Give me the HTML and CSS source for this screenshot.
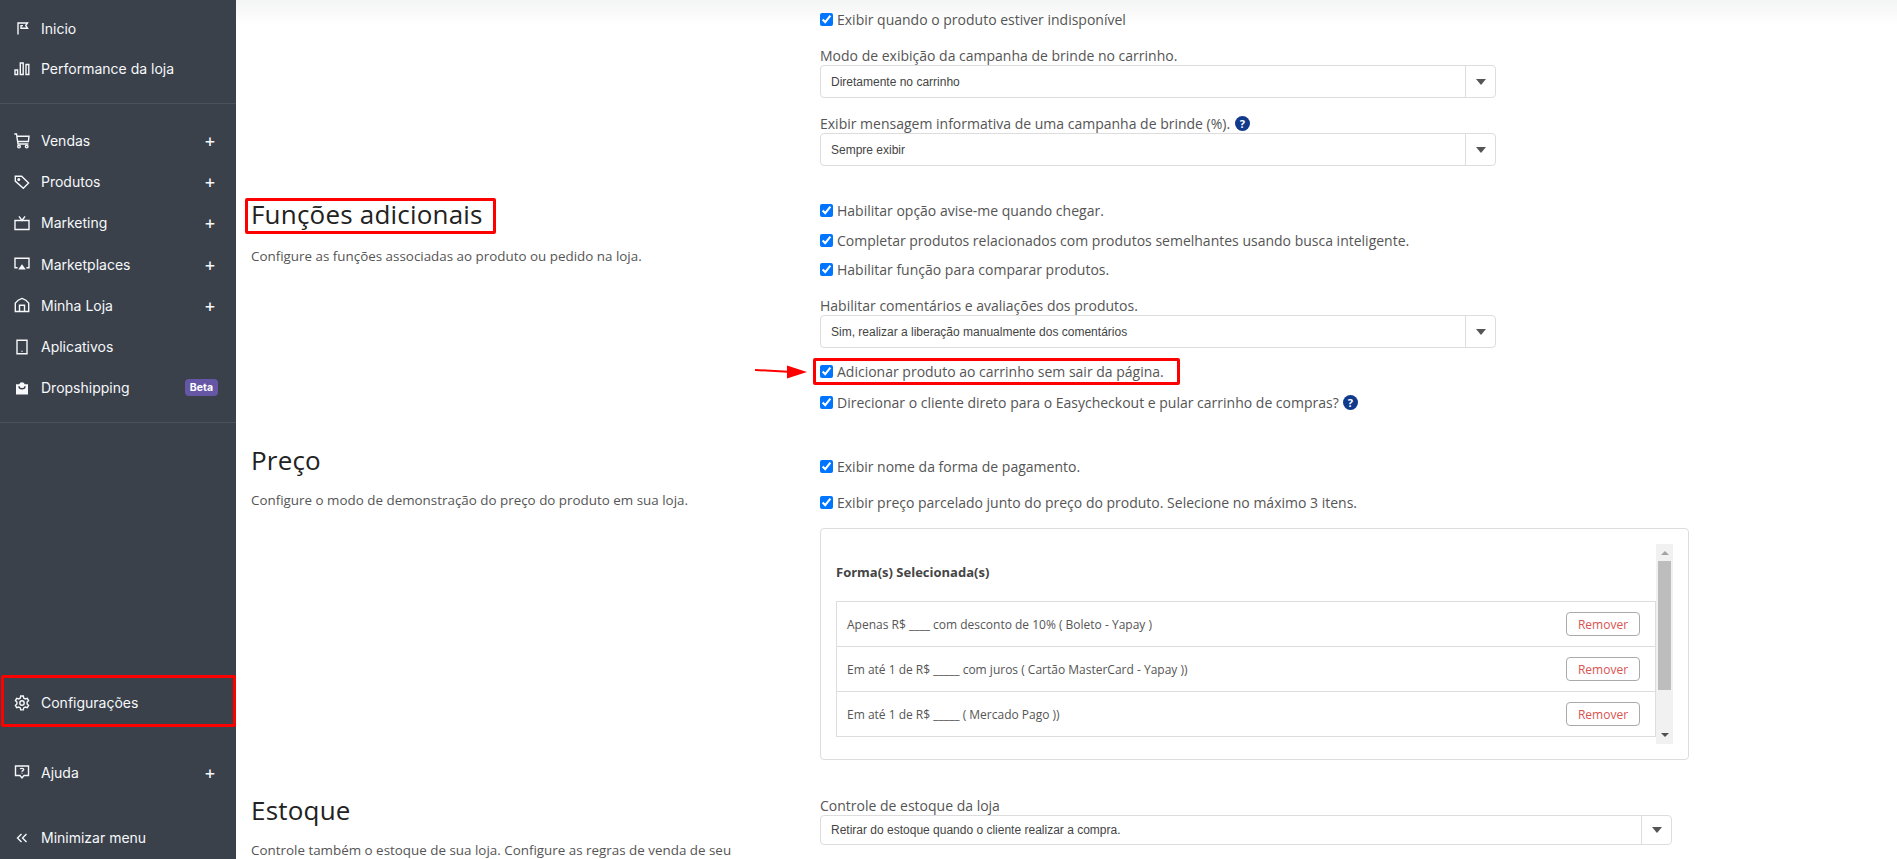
FILE: index.html
```html
<!DOCTYPE html>
<html lang="pt-BR">
<head>
<meta charset="utf-8">
<title>Configurações</title>
<link rel="stylesheet" href="styles.css">
</head>
<body>
<aside class="sidebar">
  <nav class="group first">
    <a class="item"><svg class="ico" viewBox="0 0 16 16"><path d="M4 14.5V3h9.5l-1.8 2.5 1.8 2.7H7V5.6h2"/></svg><span>Inicio</span></a>
    <a class="item"><svg class="ico" viewBox="0 0 16 16"><path d="M1 10h2.6v4.5H1zM6.3 3h2.9v11.5H6.3zM12 4.5h2.8v10H12z"/></svg><span>Performance da loja</span></a>
  </nav>
  <nav class="group second">
    <a class="item"><svg class="ico" viewBox="0 0 16 16"><path d="M.3 1h2.2l1.5 10h10.4M3 3.2h12l-.6 5.3H3.8"/><circle cx="5" cy="13.6" r="1.3"/><circle cx="12.7" cy="13.6" r="1.3"/></svg><span>Vendas</span><i class="plus">+</i></a>
    <a class="item"><svg class="ico" viewBox="0 0 16 16"><path d="M1.3 2.2h6.3l7 6.8-5.3 5.3-8-7.2z"/><circle cx="4.8" cy="5.4" r=".8"/></svg><span>Produtos</span><i class="plus">+</i></a>
    <a class="item"><svg class="ico" viewBox="0 0 16 16"><path d="M1 5.5h14v9H1zM5 1.3l3 4.2 3-4.2"/></svg><span>Marketing</span><i class="plus">+</i></a>
    <a class="item"><svg class="ico" viewBox="0 0 16 16"><path d="M3.6 11.8H1V2.2h14v9.6h-2.6"/><path class="fill" d="M8 8.3l3.8 5.2H4.2z"/></svg><span>Marketplaces</span><i class="plus">+</i></a>
    <a class="item"><svg class="ico" viewBox="0 0 16 16"><path d="M1.3 14.5V6.2C3 3.5 5.5 2 8 1.3c2.5.7 5 2.2 6.7 4.9v8.3zM5.5 14.5V8.2h5v6.3"/></svg><span>Minha Loja</span><i class="plus">+</i></a>
    <a class="item"><svg class="ico" viewBox="0 0 16 16"><path d="M3 1.3h10v13.4H3z"/><path d="M8 11.7v1"/></svg><span>Aplicativos</span></a>
    <a class="item"><svg class="ico" viewBox="0 0 16 16"><path class="fill" d="M2 4.2h3.2a3 3 0 0 1 5.6 0H14v10.3H2z"/><path class="cut" d="M5 6.2a3 2.6 0 0 0 6 0"/></svg><span>Dropshipping</span><b class="beta">Beta</b></a>
  </nav>
  <div class="bottom">
    <a class="item config"><svg class="ico" viewBox="0 0 16 16"><path d="M6.7 1h2.6l.4 2 1.6.9 2-.6 1.3 2.3-1.5 1.4v1.9l1.5 1.4-1.3 2.3-2-.6-1.6.9-.4 2H6.7l-.4-2-1.6-.9-2 .6-1.3-2.3L2.9 9V7.1L1.4 5.6l1.3-2.3 2 .6 1.6-.9z"/><circle cx="8" cy="8" r="2.2"/></svg><span>Configurações</span></a>
    <a class="item help"><svg class="ico" viewBox="0 0 16 16"><path d="M1.5 2h13v9.5H10l-2 2.5-2-2.5H1.5z"/><path d="M6.3 5.2c.3-1.2 3.4-1.2 3.4.4 0 1-1.7 1.1-1.7 2.2M8 8.7v.7"/></svg><span>Ajuda</span><i class="plus">+</i></a>
    <a class="item min"><svg class="ico" viewBox="0 0 16 16"><path d="M7.5 4l-4 4 4 4M12.5 4l-4 4 4 4"/></svg><span>Minimizar menu</span></a>
  </div>
</aside>

<main class="main">
  <section class="sec sec-a">
    <div class="left"></div>
    <div class="right">
      <label class="check"><input type="checkbox" checked>Exibir quando o produto estiver indisponível</label>
      <div class="label gap-17">Modo de exibição da campanha de brinde no carrinho.</div>
      <div class="select"><span>Diretamente no carrinho</span><i class="caret"></i></div>
      <div class="label gap-16">Exibir mensagem informativa de uma campanha de brinde (%). <b class="q">?</b></div>
      <div class="select"><span>Sempre exibir</span><i class="caret"></i></div>
    </div>
  </section>

  <section class="sec sec-b">
    <div class="left">
      <h2 class="marked">Funções adicionais</h2>
      <p class="desc">Configure as funções associadas ao produto ou pedido na loja.</p>
    </div>
    <div class="right">
      <label class="check"><input type="checkbox" checked>Habilitar opção avise-me quando chegar.</label>
      <label class="check gap-10"><input type="checkbox" checked>Completar produtos relacionados com produtos semelhantes usando busca inteligente.</label>
      <label class="check gap-9"><input type="checkbox" checked>Habilitar função para comparar produtos.</label>
      <div class="label gap-17">Habilitar comentários e avaliações dos produtos.</div>
      <div class="select"><span>Sim, realizar a liberação manualmente dos comentários</span><i class="caret"></i></div>
      <div class="mark-row">
        <svg class="arrow" viewBox="0 0 52 14"><path class="shaft" d="M0 5l33 1.7"/><path d="M32 .5L52 7 32 13.5z"/></svg>
        <label class="check boxed"><input type="checkbox" checked>Adicionar produto ao carrinho sem sair da página.</label>
      </div>
      <label class="check gap-7"><input type="checkbox" checked>Direcionar o cliente direto para o Easycheckout e pular carrinho de compras? <b class="q">?</b></label>
    </div>
  </section>

  <section class="sec sec-c">
    <div class="left">
      <h2 class="lifted">Preço</h2>
      <p class="desc desc-c">Configure o modo de demonstração do preço do produto em sua loja.</p>
    </div>
    <div class="right wide">
      <label class="check"><input type="checkbox" checked>Exibir nome da forma de pagamento.</label>
      <label class="check gap-16"><input type="checkbox" checked>Exibir preço parcelado junto do preço do produto. Selecione no máximo 3 itens.</label>
      <div class="panel">
        <div class="scroller">
          <div class="content">
            <div class="panel-title">Forma(s) Selecionada(s)</div>
            <ul class="list">
              <li><span>Apenas R$ ____ com desconto de 10% ( Boleto - Yapay )</span><button class="btn">Remover</button></li>
              <li><span>Em até 1 de R$ _____ com juros ( Cartão MasterCard - Yapay ))</span><button class="btn">Remover</button></li>
              <li><span>Em até 1 de R$ _____ ( Mercado Pago ))</span><button class="btn">Remover</button></li>
            </ul>
          </div>
          <div class="scrollbar"><i class="up"></i><i class="thumb"></i><i class="down"></i></div>
        </div>
      </div>
    </div>
  </section>

  <section class="sec sec-d">
    <div class="left">
      <h2>Estoque</h2>
      <p class="desc desc-c">Controle também o estoque de sua loja. Configure as regras de venda de seu</p>
    </div>
    <div class="right stock">
      <div class="label">Controle de estoque da loja</div>
      <div class="select short"><span>Retirar do estoque quando o cliente realizar a compra.</span><i class="caret"></i></div>
    </div>
  </section>
</main>
</body>
</html>
```

FILE: styles.css
```css
* { box-sizing: border-box; }
html, body { margin: 0; height: 100%; overflow: hidden; }
body { display: flex; background: #fff; font-family: "Open Sans", sans-serif; font-size: 14px; color: #555; }

.sidebar { width: 236px; height: 859px; flex: none; background: #3a414b; color: #f6f8fa; display: flex; flex-direction: column; font-family: "Inter", sans-serif; font-size: 14px; }
.group.first { padding: 8px 0 15px; border-bottom: 1px solid #48515c; }
.group.first .item { height: 40px; }
.group.second { padding: 16px 0 14px; border-bottom: 1px solid #48515c; }
.item { display: flex; align-items: center; height: 41.2px; padding-left: 14px; padding-right: 18px; position: relative; }
.item span { margin-left: 11px; flex: 1; white-space: nowrap; }
.ico { width: 16px; height: 16px; flex: none; fill: none; stroke: #f6f8fa; stroke-width: 1.4; }
.ico .fill { fill: #f6f8fa; stroke: none; }
.ico .cut { stroke: #3a414b; }
.plus { font-style: normal; font-size: 18px; font-weight: 400; width: 16px; text-align: center; }
.beta { background: #6556a6; color: #fff; font-size: 10.5px; font-weight: 700; padding: 0 5px; height: 17px; line-height: 17px; border-radius: 4px; }
.bottom { margin-top: auto; }
.config { margin: 0 0 24px 1px; height: 52px; padding-left: 10px; padding-top: 3px; border: 3px solid #f00; border-radius: 2px; width: 235px; }
.help { height: 42px; margin-bottom: 24px; }
.min { height: 41px; margin-bottom: 1px; }

.main { flex: 1; min-width: 0; height: 859px; overflow: hidden; padding-top: 9px; position: relative; }
.main::before { content: ""; position: absolute; left: 0; right: 0; top: 0; height: 24px; background: linear-gradient(#f3f4f4, #fff); }
.sec { display: grid; grid-template-columns: 584px 1fr; position: relative; }
.left { padding-left: 15px; }
.right { width: 676px; }
.right.wide { width: 869px; }
.right.stock { width: 852px; padding-top: 4px; }
.sec-b { margin-top: 32px; }
.sec-b .right { padding-top: 2px; }
.sec-c { margin-top: 31px; }
.sec-c .right { padding-top: 13px; }
.sec-d { margin-top: 32px; }

h2 { margin: 0; font-size: 26px; font-weight: 500; letter-spacing: .2px; line-height: 36px; color: #222; }
h2.marked { display: block; width: 251px; margin-left: -6px; padding: 0 0 4px 3px; border: 3px solid #f00; border-radius: 2px; line-height: 26px; white-space: nowrap; }
h2.lifted { margin-top: -1px; margin-bottom: 1px; }
.desc { margin: 12px 0 0; font-size: 13.4px; line-height: 20px; width: 520px; white-space: nowrap; }
.desc-c { margin-top: 12px; }

.check { display: flex; align-items: center; height: 20px; white-space: nowrap; }
.check input { width: 13px; height: 13px; margin: 0 4px 0 0; accent-color: #0075ff; flex: none; }
.gap-7 { margin-top: 7px; }
.gap-9 { margin-top: 9px; }
.gap-10 { margin-top: 10px; }
.gap-16 { margin-top: 16px; }
.gap-17 { margin-top: 17px; }
.label { height: 19px; line-height: 19px; white-space: nowrap; }
.q { display: inline-block; width: 15px; height: 15px; border-radius: 50%; background: #123a8c; color: #fff; font-size: 11px; line-height: 15px; text-align: center; vertical-align: 1px; font-weight: 700; margin-left: 1px; }
.check .q { margin-left: 4px; }

.select { display: flex; align-items: center; height: 33px; border: 1px solid #ddd; border-radius: 4px; font-family: "Liberation Sans", sans-serif; font-size: 12px; color: #444; padding-left: 10px; position: relative; }
.select span { flex: 1; }
.select.short { height: 30px; }
.caret { width: 30px; height: 100%; border-left: 1px solid #ddd; display: flex; align-items: center; justify-content: center; }
.caret::after { content: ""; border: 5px solid transparent; border-top: 6px solid #555; border-bottom: 0; }

.mark-row { position: relative; margin-top: 10px; }
.boxed { margin-left: -7px; padding-left: 4px; height: 27px; width: 367px; border: 3px solid #f00; border-radius: 2px; }
.arrow { position: absolute; left: -65px; top: 7px; width: 52px; height: 14px; fill: #f00; stroke: none; }
.arrow .shaft { stroke: #f00; stroke-width: 2; fill: none; }

.panel { margin-top: 16px; height: 232px; border: 1px solid #ddd; border-radius: 4px; padding: 15px; }
.scroller { display: flex; height: 200px; overflow: hidden; }
.content { flex: 1; min-width: 0; }
.panel-title { height: 57px; padding-top: 18px; font-size: 13px; font-weight: 700; line-height: 20px; color: #444; }
.list { list-style: none; margin: 0; padding: 0; border: 1px solid #ddd; border-bottom: 0; }
.list li { display: flex; align-items: center; justify-content: space-between; height: 45px; padding: 0 15px 0 10px; border-bottom: 1px solid #ddd; font-size: 12px; }
.btn { width: 74px; height: 24px; padding: 0; background: #fff; border: 1px solid #aaa; border-radius: 4px; color: #d9534f; font: 12px "Open Sans", sans-serif; }
.scrollbar { width: 17px; background: #f1f1f1; position: relative; display: flex; flex-direction: column; align-items: center; flex: none; }
.up { margin-top: 7px; border: 4px solid transparent; border-bottom: 4px solid #a3a3a3; border-top: 0; }
.thumb { width: 13px; height: 129px; margin-top: 6px; background: #bdbdbd; }
.down { margin-top: auto; margin-bottom: 7px; border: 4px solid transparent; border-top: 4px solid #505050; border-bottom: 0; }
```
